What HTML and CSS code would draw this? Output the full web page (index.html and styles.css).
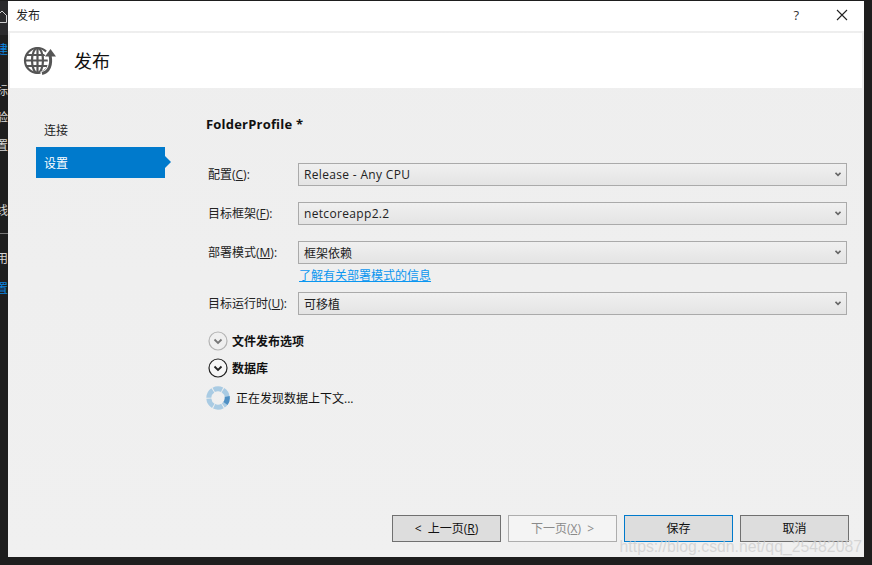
FILE: index.html
```html
<!DOCTYPE html>
<html lang="zh-CN">
<head>
<meta charset="utf-8">
<title>发布</title>
<link rel="stylesheet" href="styles.css">
</head>
<body>
<div class="desktop">
  <aside class="strip">
    <div class="strip-home"><svg width="8" height="14" viewBox="0 0 8 14"><path d="M-3 6 2 1 7 6M6.500 5.500V12.500H-3" fill="none" stroke="#d0d0d0" stroke-width="1"/></svg></div>
    <div class="strip-row r1 blue">建</div>
    <div class="strip-row r2">标</div>
    <div class="strip-row r3">验</div>
    <div class="strip-row r4">置</div>
    <div class="strip-row r5">线</div>
    <div class="strip-line"></div>
    <div class="strip-row r6">用</div>
    <div class="strip-row r7 blue">置</div>
  </aside>
  <section class="dialog">
    <header class="titlebar">
      <span class="title">发布</span>
      <span class="help">?</span>
      <svg class="close" width="12" height="12" viewBox="0 0 12 12"><path d="M1 1 11 11M11 1 1 11" stroke="#222" stroke-width="1.100" fill="none"/></svg>
    </header>
    <div class="banner">
      <svg class="globe" width="36" height="32" viewBox="0 0 36 32">
        <g fill="none" stroke="#555" stroke-width="2.200">
          <circle cx="14.500" cy="15.500" r="12.500"/>
          <ellipse cx="14.500" cy="15.500" rx="5.500" ry="12.500"/>
          <path d="M14.500 3V28M2 15.500H27M4 10H25M4 21H25"/>
        </g>
        <path d="M18 30C27 28 30 20 27 10" fill="none" stroke="#fff" stroke-width="6.500"/>
        <path d="M21 9 27 2 34 9 30 13H24Z" fill="#fff"/>
        <path d="M19 28.500C26 27 29 20 27 10" fill="none" stroke="#555" stroke-width="3"/>
        <path d="M22 11.500 27.500 4 33 11.500Z" fill="#555"/>
      </svg>
      <h1 class="banner-title">发布</h1>
    </div>
    <div class="body">
      <nav class="nav">
        <div class="nav-item">连接</div>
        <div class="nav-item active">设置</div>
      </nav>
      <main class="content">
        <h2 class="profile">FolderProfile *</h2>
        <div class="field">
          <label class="label">配置(<u>C</u>):</label>
          <div class="select"><span class="latin">Release - Any CPU</span><svg class="chev" width="6" height="5" viewBox="0 0 6 5"><path d="M.5.800 3 3.400 5.500.800" fill="none" stroke="#666" stroke-width="1.600"/></svg></div>
        </div>
        <div class="field">
          <label class="label">目标框架(<u>F</u>):</label>
          <div class="select"><span class="latin">netcoreapp2.2</span><svg class="chev" width="6" height="5" viewBox="0 0 6 5"><path d="M.5.800 3 3.400 5.500.800" fill="none" stroke="#666" stroke-width="1.600"/></svg></div>
        </div>
        <div class="field tight">
          <label class="label">部署模式(<u>M</u>):</label>
          <div class="select"><span>框架依赖</span><svg class="chev" width="6" height="5" viewBox="0 0 6 5"><path d="M.5.800 3 3.400 5.500.800" fill="none" stroke="#666" stroke-width="1.600"/></svg></div>
        </div>
        <a class="link">了解有关部署模式的信息</a>
        <div class="field">
          <label class="label">目标运行时(<u>U</u>):</label>
          <div class="select"><span>可移植</span><svg class="chev" width="6" height="5" viewBox="0 0 6 5"><path d="M.5.800 3 3.400 5.500.800" fill="none" stroke="#666" stroke-width="1.600"/></svg></div>
        </div>
        <div class="expander">
          <svg width="20" height="20" viewBox="0 0 20 20"><circle cx="10" cy="10" r="9" fill="none" stroke="#b4b4b4" stroke-width="1.200"/><path d="M6.500 8.500 10 12 13.500 8.500" fill="none" stroke="#777" stroke-width="1.800"/></svg>
          <span>文件发布选项</span>
        </div>
        <div class="expander">
          <svg width="20" height="20" viewBox="0 0 20 20"><circle cx="10" cy="10" r="9" fill="#f6f6f6" stroke="#222" stroke-width="1.200"/><path d="M6.500 8.500 10 12 13.500 8.500" fill="none" stroke="#222" stroke-width="1.800"/></svg>
          <span>数据库</span>
        </div>
        <div class="progress">
          <svg width="24" height="24" viewBox="0 0 24 24">
            <circle cx="12" cy="12" r="9.200" fill="none" stroke="#a9cbe3" stroke-width="5" stroke-dasharray="8.700 .95"/>
            <path d="M21.200 10.500A9.200 9.200 0 0 1 19.500 17.500" fill="none" stroke="#4f90c4" stroke-width="5"/>
          </svg>
          <span>正在发现数据上下文...</span>
        </div>
      </main>
    </div>
    <footer class="footer">
      <button class="btn">&lt;&nbsp;&nbsp;上一页(<u>R</u>)</button>
      <button class="btn disabled">下一页(<u>X</u>) &nbsp;&gt;</button>
      <button class="btn primary">保存</button>
      <button class="btn">取消</button>
    </footer>
    <div class="watermark">https://blog.csdn.net/qq_25482087</div>
  </section>
</div>
</body>
</html>
```

FILE: styles.css
```css
* { box-sizing: border-box; }
html, body { margin: 0; height: 100%; }
body {
  background: #1e1e1e;
  font-family: "Open Sans", "Noto Sans CJK SC", sans-serif;
  font-size: 12px;
  color: #1e1e1e;
  overflow: hidden;
}
.desktop { display: flex; width: 872px; height: 565px; padding: 1px 8px 8px 0; }

.strip { width: 8px; flex: none; display: flex; flex-direction: column; overflow: hidden; color: #d6d6d6; }
.strip-home { height: 34px; flex: none; background: #2b2b2d; padding-top: 9px; }
.strip-home svg { display: block; }
.strip-row { height: 16px; flex: none; display: flex; justify-content: flex-end; line-height: 16px; white-space: nowrap; }
.r1 { margin-top: 7px; }
.r2 { margin-top: 25px; }
.r3 { margin-top: 11px; }
.r4 { margin-top: 12px; }
.r5 { margin-top: 49px; }
.r6 { margin-top: 17px; }
.r7 { margin-top: 14px; }
.strip-line { height: 1px; flex: none; margin-top: 14px; background: #777; }
.blue { color: #0a84e0; }

.dialog {
  position: relative; width: 856px; flex: none; display: flex; flex-direction: column;
  background: linear-gradient(#eeeeee, #f0f0f0);
}
.titlebar { height: 30px; flex: none; background: #fff; display: flex; align-items: center; padding: 0 16px 2px 8px; }
.title { font-size: 12px; flex: 1; }
.help { font-size: 13px; margin-right: 37px; color: #333; }
.banner {
  height: 55px; flex: none; margin: 2px 2px 0; background: #fff;
  display: flex; align-items: center; padding: 0 0 0 13px;
}
.globe { flex: none; }
.banner-title { margin: 0 0 2px 15px; font-size: 18px; font-weight: 400; color: #111; }

.body { flex: 1; display: flex; min-height: 0; }
.nav { width: 163px; flex: none; padding: 26px 0 0 28px; display: flex; flex-direction: column; }
.nav-item { height: 31px; line-height: 33px; padding-left: 8px; width: 129px; position: relative; margin-bottom: 2px; }
.nav-item.active { background: #007acc; color: #fff; }
.nav-item.active::after {
  content: ""; position: absolute; left: 100%; top: 9px;
  border-left: 6px solid #007acc; border-top: 6px solid transparent; border-bottom: 6px solid transparent;
}
.content { flex: 1; padding: 27px 17px 0 35px; display: flex; flex-direction: column; }
.profile { margin: 0 0 30px; font-size: 13px; line-height: 18px; font-weight: 700; color: #111; letter-spacing: .2px; }
.field { display: flex; align-items: center; height: 23px; margin-bottom: 16px; }
.field.tight { margin-bottom: 3px; }
.label { width: 92px; flex: none; padding: 0 0 2px 2px; color: #222; }
.select {
  flex: 1; height: 23px; border: 1px solid #aaa;
  background: linear-gradient(#f0f0f0, #e4e4e4);
  display: flex; align-items: center; justify-content: space-between;
  padding: 0 5px 0 5px; color: #222;
}
.latin { letter-spacing: .33px; }
.link { margin: 0 0 8px 93px; height: 17px; line-height: 17px; color: #0a96f0; text-decoration: underline; }
.expander { display: flex; align-items: center; gap: 4px; height: 20px; margin: 0 0 7px 2px; font-weight: 700; color: #111; }
.progress { display: flex; align-items: center; gap: 6px; height: 24px; margin-top: 1px; color: #111; }

.footer { flex: none; height: 42px; display: flex; gap: 7px; justify-content: flex-end; padding: 0 15px 15px 0; }
.btn {
  width: 109px; height: 27px; padding: 0 0 2px; border: 1px solid #707070; background: #ddd;
  font: inherit; color: #111;
}
.btn.primary { border-color: #007acc; }
.btn.disabled { border-color: #adadad; background: #f4f4f4; color: #8a8a8a; }
.watermark {
  position: absolute; right: 2px; bottom: 1px;
  font-family: "Liberation Sans", sans-serif; font-size: 15.800px;
  color: rgba(205, 205, 205, .75); white-space: nowrap;
}
```
